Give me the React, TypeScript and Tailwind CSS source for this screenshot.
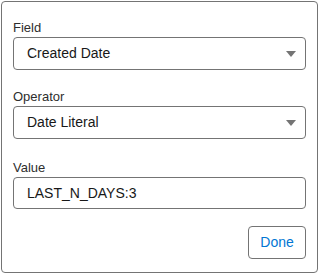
import React from 'react';

function Caret() {
  return (
    <svg width="10" height="6" viewBox="0 0 10 6" className="shrink-0">
      <path d="M0 0 H10 L5 6 Z" fill="#747474" />
    </svg>
  );
}

function SelectBox({ value }: { value: string }) {
  return (
    <div className="flex h-[33px] items-center justify-between rounded-[4px] border border-[#747474] bg-white pl-[13px] pr-[9px] text-[14px] text-[#181818]">
      <span>{value}</span>
      <Caret />
    </div>
  );
}

export default function App() {
  const fields = [
    { label: 'Field', value: 'Created Date' },
    { label: 'Operator', value: 'Date Literal' },
  ];

  return (
    <div className="h-[273px] w-[320px] bg-white" style={{ fontFamily: '"Liberation Sans", Arial, sans-serif' }}>
      <div className="ml-px mt-px flex h-[272px] w-[317px] flex-col rounded-[4px] border border-[#747474] px-[11px] pt-[17px]">
        {fields.map((f) => (
          <div key={f.label} className="mb-[18px]">
            <div className="h-[18px] text-[13px] leading-[18px] text-[#2e2e2e]">{f.label}</div>
            <SelectBox value={f.value} />
          </div>
        ))}

        {/* Value input */}
        <div className="mt-[2px]">
          <div className="h-[18px] text-[13px] leading-[18px] text-[#2e2e2e]">Value</div>
          <div className="flex h-[32px] items-center rounded-[4px] border border-[#747474] pl-[13px] text-[14px] text-[#181818]">
            LAST_N_DAYS:3
          </div>
        </div>

        <div className="mt-[17px] flex justify-end">
          <button className="h-[33px] w-[58px] rounded-[4px] border border-[#747474] bg-white text-[14px] text-[#0176d3]">
            Done
          </button>
        </div>
      </div>
    </div>
  );
}
